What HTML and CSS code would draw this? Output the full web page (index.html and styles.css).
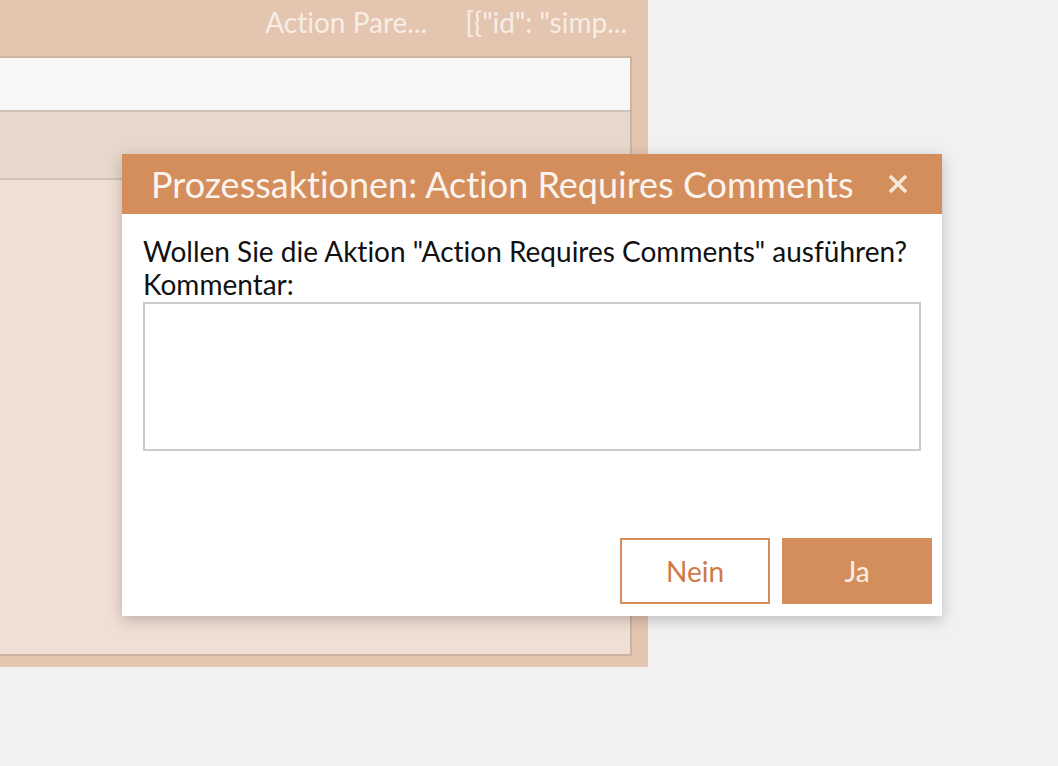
FILE: index.html
```html
<!DOCTYPE html>
<html>
<head>
<meta charset="utf-8">
<link rel="stylesheet" href="styles.css">
</head>
<body>
<div class="page">
  <div class="panel">
    <div class="panel-head">
      <span class="col col-a">Action Pare...</span>
      <span class="col col-b">[{"id": "simp...</span>
    </div>
    <div class="inner">
      <div class="row-top"></div>
      <div class="row-mid"></div>
      <div class="row-rest"></div>
    </div>
  </div>
  <div class="dialog">
    <div class="dialog-head">
      <span class="dialog-title">Prozessaktionen: Action Requires Comments</span>
      <svg class="close" width="20" height="20" viewBox="0 0 20 20"><path d="M2 2 L18 18 M18 2 L2 18" stroke="#f7e6da" stroke-width="3.6" stroke-linecap="butt"/></svg>
    </div>
    <div class="dialog-body">
      <div class="question">Wollen Sie die Aktion "Action Requires Comments" ausführen?</div>
      <div class="label">Kommentar:</div>
      <textarea class="comment"></textarea>
    </div>
    <div class="dialog-foot">
      <button class="btn btn-no">Nein</button>
      <button class="btn btn-yes">Ja</button>
    </div>
  </div>
</div>
</body>
</html>
```
FILE: styles.css
```css
html, body {
  margin: 0;
  padding: 0;
}
body {
  background: #f1f1f1;
  font-family: Lato, "Open Sans", sans-serif;
  font-variant-ligatures: none;
  width: 1058px;
  height: 766px;
  overflow: hidden;
}
.page {
  position: relative;
  width: 1058px;
  height: 766px;
}
.panel {
  width: 648px;
  height: 667px;
  background: #e4c5b0;
  display: flex;
  flex-direction: column;
}
.panel-head {
  height: 56px;
  display: flex;
  justify-content: flex-end;
  align-items: flex-start;
  padding: 4px 21px 0 0;
  box-sizing: border-box;
  color: #f7ede6;
  font-size: 28px;
  line-height: 36px;
}
.col-a {
  margin-right: 38px;
}
.inner {
  width: 632px;
  height: 600px;
  border: 2px solid #cdb3a2;
  border-left: none;
  box-sizing: border-box;
  display: flex;
  flex-direction: column;
}
.row-top {
  height: 52px;
  background: #f7f7f7;
  border-bottom: 2px solid #d1c1b6;
}
.row-mid {
  height: 66px;
  background: #e6d8cd;
  border-bottom: 2px solid #d4c2b6;
}
.row-rest {
  flex: 1;
  background: #f0dfd5;
}
.dialog {
  position: absolute;
  left: 122px;
  top: 154px;
  width: 820px;
  height: 462px;
  background: #fff;
  box-shadow: 0 4px 14px rgba(0,0,0,0.22);
  display: flex;
  flex-direction: column;
}
.dialog-head {
  height: 60px;
  background: #d38e5c;
  display: flex;
  align-items: center;
  justify-content: space-between;
  padding: 0 34px 0 29px;
  color: #fbf3ed;
}
.dialog-title {
  font-size: 36px;
  line-height: 40px;
}
.close {
  display: block;
}
.dialog-body {
  padding: 21px 21px 0 21px;
  font-size: 28px;
  color: #111;
  line-height: 33px;
  flex: 1;
}
.comment {
  display: block;
  width: 778px;
  height: 149px;
  box-sizing: border-box;
  border: 2px solid #cbcbcb;
  margin: 1px 0 0 0;
  resize: none;
  background: #fff;
}
.dialog-foot {
  display: flex;
  justify-content: flex-end;
  gap: 12px;
  padding: 0 10px 12px 0;
}
.btn {
  width: 150px;
  height: 66px;
  font-family: Lato, "Open Sans", sans-serif;
  font-variant-ligatures: none;
  font-size: 28px;
  border: 2px solid #d38e5c;
  cursor: pointer;
  padding: 0;
}
.btn-no {
  background: #fff;
  color: #cd7a44;
}
.btn-yes {
  background: #d38e5c;
  color: #fbf0e8;
}
```
